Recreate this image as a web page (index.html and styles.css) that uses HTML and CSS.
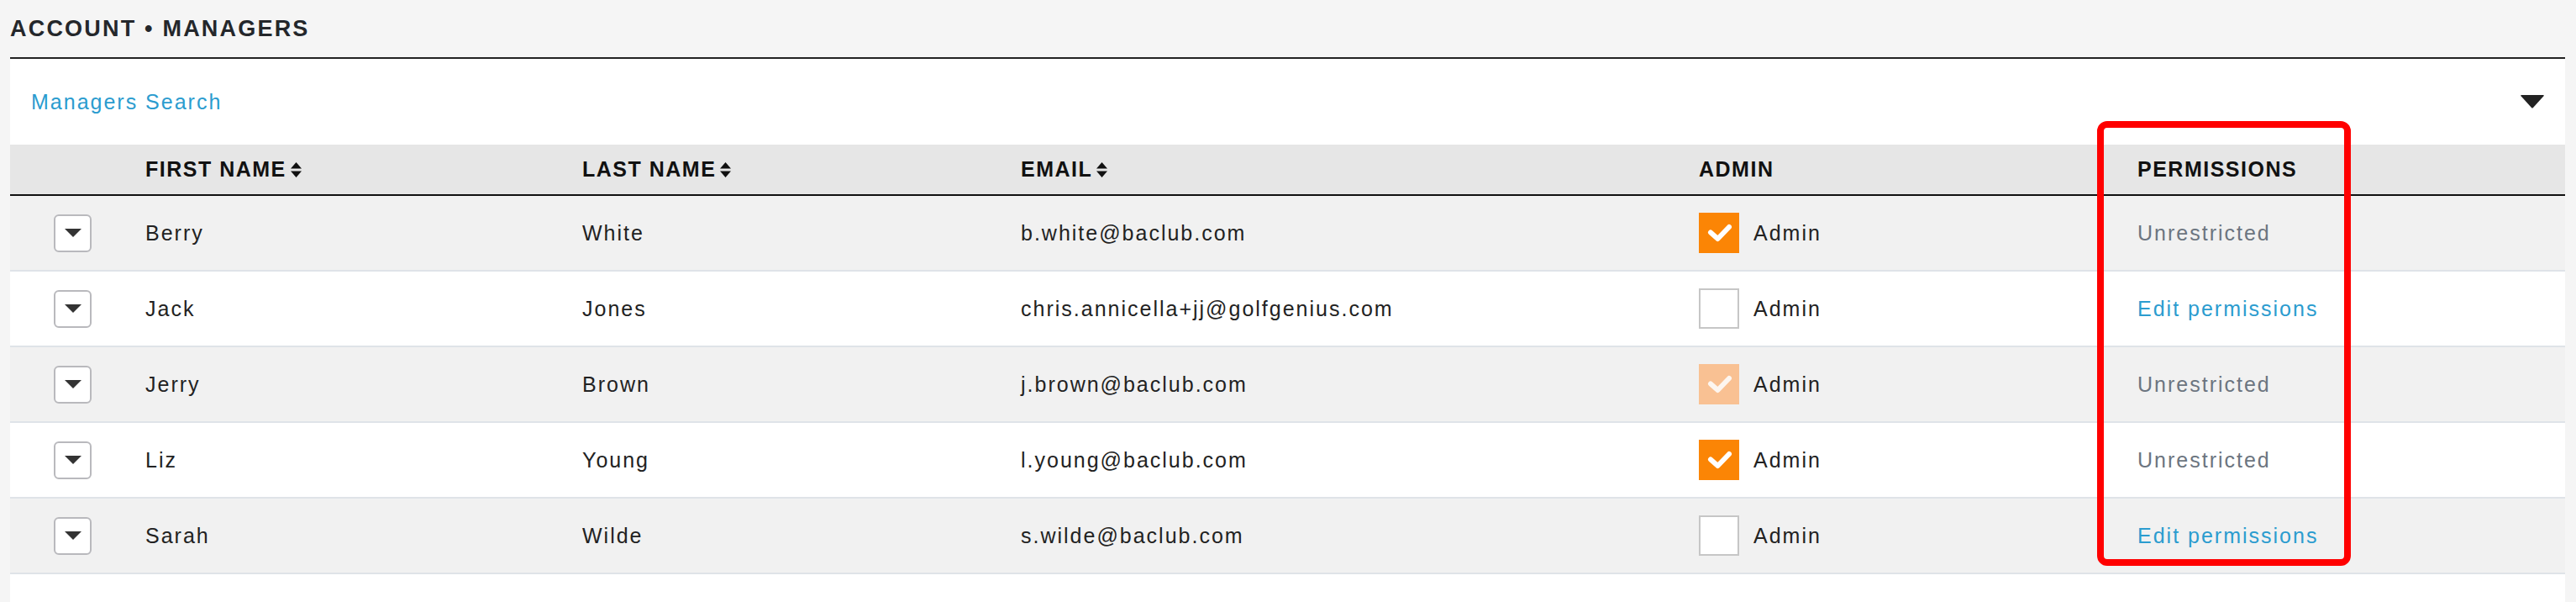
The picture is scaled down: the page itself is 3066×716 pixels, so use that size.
FILE: index.html
```html
<!DOCTYPE html>
<html lang="en">
<head>
    <meta charset="UTF-8">
    <meta name="viewport" content="width=device-width, initial-scale=1.0">
    <title>Account - Managers</title>
    <link rel="stylesheet" href="styles.css">
</head>
<body>
    <h1 class="page-title">ACCOUNT &bull; MANAGERS</h1>

    <div class="panel">
        <div class="search-bar">
            <a href="#" class="search-link">Managers Search</a>
            <svg class="caret" width="28" height="16" viewBox="0 0 28 16"><path d="M1 0h26q1.5 0 .5 1.2L15 15q-1 1-2 0L.5 1.2Q-.5 0 1 0z" fill="#222"/></svg>
        </div>

        <div class="grid-head">
            <div></div>
            <div class="head-cell">FIRST NAME<svg class="sort" width="13" height="18" viewBox="0 0 13 18"><path d="M6.5 0L13 7.5H0zM0 10.5h13L6.5 18z" fill="#111"/></svg></div>
            <div class="head-cell">LAST NAME<svg class="sort" width="13" height="18" viewBox="0 0 13 18"><path d="M6.5 0L13 7.5H0zM0 10.5h13L6.5 18z" fill="#111"/></svg></div>
            <div class="head-cell">EMAIL<svg class="sort" width="13" height="18" viewBox="0 0 13 18"><path d="M6.5 0L13 7.5H0zM0 10.5h13L6.5 18z" fill="#111"/></svg></div>
            <div class="head-cell">ADMIN</div>
            <div class="head-cell">PERMISSIONS</div>
        </div>

        <div class="grid-row odd">
            <div><button class="expand"><svg width="20" height="10" viewBox="0 0 20 10"><path d="M0 0h20L10 10z" fill="#333"/></svg></button></div>
            <div>Berry</div>
            <div>White</div>
            <div>b.white@baclub.com</div>
            <div class="admin-cell"><span class="check on"><svg width="48" height="48" viewBox="0 0 48 48"><path d="M14 23.5l8.5 7.5L36 17" fill="none" stroke="#fff" stroke-width="6" stroke-linecap="round" stroke-linejoin="round"/></svg></span>Admin</div>
            <div class="perm-plain">Unrestricted</div>
        </div>

        <div class="grid-row">
            <div><button class="expand"><svg width="20" height="10" viewBox="0 0 20 10"><path d="M0 0h20L10 10z" fill="#333"/></svg></button></div>
            <div>Jack</div>
            <div>Jones</div>
            <div>chris.annicella+jj@golfgenius.com</div>
            <div class="admin-cell"><span class="check off"></span>Admin</div>
            <div><a href="#" class="perm-link">Edit permissions</a></div>
        </div>

        <div class="grid-row odd">
            <div><button class="expand"><svg width="20" height="10" viewBox="0 0 20 10"><path d="M0 0h20L10 10z" fill="#333"/></svg></button></div>
            <div>Jerry</div>
            <div>Brown</div>
            <div>j.brown@baclub.com</div>
            <div class="admin-cell"><span class="check muted"><svg width="48" height="48" viewBox="0 0 48 48"><path d="M14 23.5l8.5 7.5L36 17" fill="none" stroke="#fdf6f0" stroke-width="6" stroke-linecap="round" stroke-linejoin="round"/></svg></span>Admin</div>
            <div class="perm-plain">Unrestricted</div>
        </div>

        <div class="grid-row">
            <div><button class="expand"><svg width="20" height="10" viewBox="0 0 20 10"><path d="M0 0h20L10 10z" fill="#333"/></svg></button></div>
            <div>Liz</div>
            <div>Young</div>
            <div>l.young@baclub.com</div>
            <div class="admin-cell"><span class="check on"><svg width="48" height="48" viewBox="0 0 48 48"><path d="M14 23.5l8.5 7.5L36 17" fill="none" stroke="#fff" stroke-width="6" stroke-linecap="round" stroke-linejoin="round"/></svg></span>Admin</div>
            <div class="perm-plain">Unrestricted</div>
        </div>

        <div class="grid-row odd">
            <div><button class="expand"><svg width="20" height="10" viewBox="0 0 20 10"><path d="M0 0h20L10 10z" fill="#333"/></svg></button></div>
            <div>Sarah</div>
            <div>Wilde</div>
            <div>s.wilde@baclub.com</div>
            <div class="admin-cell"><span class="check off"></span>Admin</div>
            <div><a href="#" class="perm-link">Edit permissions</a></div>
        </div>

        <div class="highlight"></div>
    </div>
</body>
</html>
```

FILE: styles.css
```css
body {
    margin: 0;
    background: #f5f5f5;
    font-family: "Liberation Sans", Arial, sans-serif;
    color: #222;
    overflow: hidden;
}
.page-title {
    margin: 0;
    height: 68px;
    display: flex;
    align-items: center;
    padding-left: 12px;
    font-size: 27px;
    font-weight: bold;
    letter-spacing: 2.2px;
    color: #24272b;
}
.panel {
    position: relative;
    margin-left: 12px;
    width: 3041px;
    height: 646px;
    background: #fff;
    border-top: 2px solid #222;
}
.search-bar {
    height: 102px;
    display: flex;
    align-items: center;
    justify-content: space-between;
    padding: 0 25px;
}
.search-link {
    color: #2b9ccf;
    font-size: 25px;
    letter-spacing: 2px;
    text-decoration: none;
}
.grid-head, .grid-row {
    display: grid;
    grid-template-columns: 161px 520px 522px 807px 522px 1fr;
    align-items: center;
}
.grid-head {
    height: 59px;
    background: #e6e6e6;
    border-bottom: 2px solid #111;
    font-size: 25px;
    font-weight: bold;
    letter-spacing: 1.5px;
    color: #111;
}
.head-cell {
    display: flex;
    align-items: center;
}
.sort {
    margin-left: 5px;
}
.grid-row {
    height: 88px;
    border-bottom: 2px solid #dfe3e8;
    font-size: 25px;
    letter-spacing: 2px;
    color: #222;
}
.grid-row.odd {
    background: #f1f1f1;
}
.expand {
    width: 45px;
    height: 45px;
    margin-left: 52px;
    padding: 0;
    border: 2px solid #b9b9bd;
    border-radius: 6px;
    background: #fff;
    display: flex;
    align-items: center;
    justify-content: center;
}
.admin-cell {
    display: flex;
    align-items: center;
    gap: 17px;
}
.check {
    width: 48px;
    height: 48px;
    box-sizing: border-box;
    display: flex;
}
.check.on {
    background: #fb8505;
}
.check.muted {
    background: #f9c193;
}
.check.off {
    background: #fff;
    border: 2px solid #c6c6c6;
}
.perm-plain {
    color: #6c7580;
}
.perm-link {
    color: #2b9ccf;
    text-decoration: none;
}
.highlight {
    position: absolute;
    left: 2484px;
    top: 74px;
    width: 302px;
    height: 529px;
    box-sizing: border-box;
    border: 8px solid #ff0000;
    border-radius: 12px;
}
```
